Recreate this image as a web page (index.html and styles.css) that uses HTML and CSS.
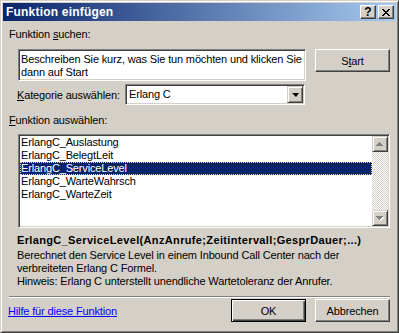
FILE: index.html
```html
<!DOCTYPE html>
<html lang="de">
<head>
    <meta charset="UTF-8">
    <meta name="viewport" content="width=device-width, initial-scale=1">
    <title>Funktion einfügen</title>
    <link rel="stylesheet" href="styles.css">
</head>
<body>
<div class="window">
    <!-- Title bar -->
    <div class="titlebar">
        <span class="title">Funktion einfügen</span>
        <div class="caption-btns">
            <button class="cap-btn help">?</button>
            <button class="cap-btn close">
                <svg width="8" height="7" viewBox="0 0 8 7" shape-rendering="crispEdges">
                    <path d="M0 0h2v1h-2z M6 0h2v1h-2z M1 1h2v1h-2z M5 1h2v1h-2z M2 2h4v1h-4z M3 3h2v1h-2z M2 4h4v1h-4z M1 5h2v1h-2z M5 5h2v1h-2z M0 6h2v1h-2z M6 6h2v1h-2z" fill="#000"/>
                </svg>
            </button>
        </div>
    </div>

    <div class="content">
        <div class="label">Funktion <u>s</u>uchen:</div>

        <!-- Search row -->
        <div class="search-row">
            <div class="search-box">Beschreiben Sie kurz, was Sie tun möchten und klicken Sie<br>dann auf Start</div>
            <button class="btn">S<u>t</u>art</button>
        </div>

        <!-- Category -->
        <div class="cat-row">
            <span class="cat-label"><u>K</u>ategorie auswählen:</span>
            <div class="select">
                <span class="select-value">Erlang C</span>
                <span class="drop-btn"><span class="arrow-down"></span></span>
            </div>
        </div>

        <div class="label func-label"><u>F</u>unktion auswählen:</div>

        <!-- Function list -->
        <div class="list">
            <div class="items">
                <div class="item">ErlangC_Auslastung</div>
                <div class="item">ErlangC_BelegtLeit</div>
                <div class="item selected">ErlangC_ServiceLevel</div>
                <div class="item">ErlangC_WarteWahrsch</div>
                <div class="item">ErlangC_WarteZeit</div>
            </div>
            <div class="scrollbar">
                <span class="scroll-btn">
                    <svg width="8" height="5" viewBox="0 0 8 5" shape-rendering="crispEdges">
                        <path d="M4 1h1v1h1v1h1v1h-5v-1h1v-1h1z" fill="#fff"/>
                        <path d="M3 0h1v1h1v1h1v1h1v1h-7v-1h1v-1h1v-1h1z" fill="#808080"/>
                    </svg>
                </span>
                <span class="track"></span>
                <span class="scroll-btn">
                    <svg width="8" height="5" viewBox="0 0 8 5" shape-rendering="crispEdges">
                        <path d="M1 1h7v1h-1v1h-1v1h-1v1h-1v-1h-1v-1h-1v-1h-1z" fill="#fff"/>
                        <path d="M0 0h7v1h-1v1h-1v1h-1v1h-1v-1h-1v-1h-1v-1h-1z" fill="#808080"/>
                    </svg>
                </span>
            </div>
        </div>

        <div class="sig">ErlangC_ServiceLevel(AnzAnrufe;Zeitintervall;GesprDauer;...)</div>
        <div class="desc">
            Berechnet den Service Level in einem Inbound Call Center nach der<br>
            verbreiteten Erlang C Formel.<br>
            Hinweis: Erlang C unterstellt unendliche Wartetoleranz der Anrufer.
        </div>

        <div class="separator"></div>

        <!-- Footer -->
        <div class="footer">
            <a class="help-link" href="#">Hilfe für diese Funktion</a>
            <button class="btn default">OK</button>
            <button class="btn">Abbrechen</button>
        </div>
    </div>
</div>
</body>
</html>
```

FILE: styles.css
```css
* { box-sizing: border-box; }
body {
  margin: 0;
  font-family: 'Liberation Sans', Arial, sans-serif;
  font-size: 11px;
  letter-spacing: -0.15px;
  background: #d4d0c8;
  color: #000;
}
/* Raised / sunken 3D edges, Windows 2000 look */
.window {
  width: 399px;
  height: 333px;
  background: #d4d0c8;
  border: 1px solid;
  border-color: #d4d0c8 #404040 #404040 #d4d0c8;
  box-shadow: inset 1px 1px #fff, inset -1px -1px #808080;
  padding: 2px;
  display: flex;
  flex-direction: column;
}
.titlebar {
  height: 18px;
  flex-shrink: 0;
  display: flex;
  align-items: center;
  justify-content: space-between;
  padding: 0 2px 0 3px;
  background: linear-gradient(to right, #0a246a, #a6caf0);
}
.title {
  color: #fff;
  font-weight: bold;
  font-size: 12px;
  letter-spacing: 0.2px;
}
.caption-btns { display: flex; gap: 2px; }
.cap-btn {
  width: 16px;
  height: 14px;
  padding: 0;
  margin: 0;
  background: #d4d0c8;
  border: 1px solid;
  border-color: #fff #404040 #404040 #fff;
  box-shadow: inset -1px -1px #808080;
  display: flex;
  align-items: center;
  justify-content: center;
  font-family: 'Liberation Sans', Arial, sans-serif;
}
.cap-btn.help {
  font-weight: bold;
  font-size: 12px;
  line-height: 12px;
}
.content {
  flex: 1;
  display: flex;
  flex-direction: column;
  padding: 7px 6px 0 6px;
}
.label { line-height: 13px; }
/* Search row */
.search-row {
  display: flex;
  align-items: flex-start;
  gap: 9px;
  margin-top: 8px;
  padding-left: 9px;
}
.search-box {
  width: 288px;
  height: 32px;
  background: #fff;
  border: 1px solid;
  border-color: #808080 #fff #fff #808080;
  box-shadow: inset 1px 1px #404040, inset -1px -1px #d4d0c8;
  padding: 3px 2px 0 2px;
  line-height: 13px;
  white-space: nowrap;
  overflow: hidden;
}
.btn {
  width: 75px;
  height: 23px;
  padding: 0;
  margin: 0;
  background: #d4d0c8;
  border: 1px solid;
  border-color: #fff #404040 #404040 #fff;
  box-shadow: inset -1px -1px #808080;
  font-family: 'Liberation Sans', Arial, sans-serif;
  font-size: 11px;
  letter-spacing: -0.15px;
  color: #000;
}
.btn.default {
  border: 1px solid #000;
  box-shadow: inset 1px 1px #fff, inset -1px -1px #404040, inset -2px -2px #808080;
}
/* Category */
.cat-row {
  display: flex;
  align-items: center;
  margin-top: 3px;
  padding-left: 8px;
}
.cat-label { width: 108px; }
.select {
  width: 180px;
  height: 21px;
  background: #fff;
  border: 1px solid;
  border-color: #808080 #fff #fff #808080;
  box-shadow: inset 1px 1px #404040, inset -1px -1px #d4d0c8;
  padding: 1px;
  display: flex;
  align-items: stretch;
}
.select-value {
  flex: 1;
  padding-left: 2px;
  line-height: 17px;
}
.drop-btn {
  width: 16px;
  background: #d4d0c8;
  border: 1px solid;
  border-color: #d4d0c8 #404040 #404040 #d4d0c8;
  box-shadow: inset 1px 1px #fff, inset -1px -1px #808080;
  display: flex;
  align-items: center;
  justify-content: center;
}
.arrow-down {
  width: 0;
  height: 0;
  border-left: 4px solid transparent;
  border-right: 3px solid transparent;
  border-top: 4px solid #000;
  margin-top: 1px;
}
.func-label { margin-top: 9px; }
/* Function list */
.list {
  height: 94px;
  margin: 7px 0 0 9px;
  background: #fff;
  border: 1px solid;
  border-color: #808080 #fff #fff #808080;
  box-shadow: inset 1px 1px #404040, inset -1px -1px #d4d0c8;
  padding: 1px;
  display: flex;
}
.items { flex: 1; }
.item {
  height: 13px;
  line-height: 13px;
  padding-left: 1px;
  white-space: nowrap;
}
.item.selected {
  background: #0a246a;
  color: #fff;
  outline: 1px dotted #f5db95;
  outline-offset: -1px;
}
.scrollbar {
  width: 16px;
  display: flex;
  flex-direction: column;
}
.scroll-btn {
  height: 16px;
  background: #d4d0c8;
  border: 1px solid;
  border-color: #d4d0c8 #404040 #404040 #d4d0c8;
  box-shadow: inset 1px 1px #fff, inset -1px -1px #808080;
  display: flex;
  align-items: center;
  justify-content: center;
}
.track {
  flex: 1;
  background: repeating-conic-gradient(#fff 0 25%, #d4d0c8 0 50%) 0 0 / 2px 2px;
}
.sig {
  margin-top: 6px;
  padding-left: 8px;
  font-weight: bold;
  letter-spacing: 0.35px;
  line-height: 13px;
  white-space: nowrap;
}
.desc {
  margin-top: 2px;
  padding-left: 8px;
  line-height: 13px;
  white-space: nowrap;
}
.separator {
  margin-top: 8px;
  height: 2px;
  border-top: 1px solid #808080;
  border-bottom: 1px solid #fff;
}
.footer {
  display: flex;
  align-items: center;
  gap: 9px;
  margin-top: 1px;
}
.help-link {
  flex: 1;
  color: #0000ff;
  margin-left: -1px;
}
```
